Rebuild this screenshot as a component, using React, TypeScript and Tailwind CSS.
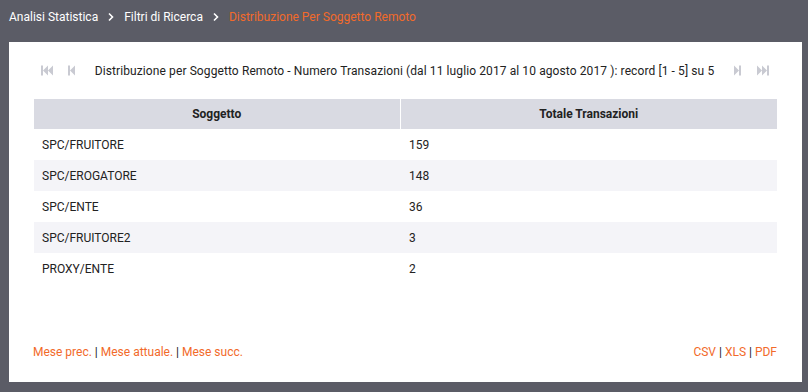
import React from "react";

const ROWS = [
  { soggetto: "SPC/FRUITORE", totale: 159 },
  { soggetto: "SPC/EROGATORE", totale: 148 },
  { soggetto: "SPC/ENTE", totale: 36 },
  { soggetto: "SPC/FRUITORE2", totale: 3 },
  { soggetto: "PROXY/ENTE", totale: 2 },
];

const Chevron = () => (
  <svg width="8" height="10" viewBox="0 0 8 10" className="mx-[9px]">
    <path d="M2 1.5 L5.5 5 L2 8.5" fill="none" stroke="#ffffff" strokeWidth="1.6" />
  </svg>
);

// paginator icons: bar + triangle(s)
const PageIcon = ({ kind }: { kind: "first" | "prev" | "next" | "last" }) => {
  const c = "#c9cad2";
  if (kind === "first")
    return (
      <svg width="13" height="11" viewBox="0 0 13 11">
        <rect x="0" y="0.5" width="2" height="10" fill={c} />
        <path d="M2 5.5 L7 0.5 V10.5 Z M7 5.5 L12 0.5 V10.5 Z" fill={c} />
      </svg>
    );
  if (kind === "prev")
    return (
      <svg width="8" height="11" viewBox="0 0 8 11">
        <rect x="0" y="0.5" width="2" height="10" fill={c} />
        <path d="M2 5.5 L7 0.5 V10.5 Z" fill={c} />
      </svg>
    );
  if (kind === "next")
    return (
      <svg width="8" height="11" viewBox="0 0 8 11">
        <path d="M1 0.5 L6 5.5 L1 10.5 Z" fill={c} />
        <rect x="6" y="0.5" width="2" height="10" fill={c} />
      </svg>
    );
  return (
    <svg width="13" height="11" viewBox="0 0 13 11">
      <path d="M1 0.5 L6 5.5 L1 10.5 Z M6 0.5 L11 5.5 L6 10.5 Z" fill={c} />
      <rect x="11" y="0.5" width="2" height="10" fill={c} />
    </svg>
  );
};

export default function App() {
  return (
    <div className="w-[808px] h-[392px] bg-[#5b5c66] font-['Roboto',sans-serif] flex flex-col">
      {/* breadcrumb */}
      <div className="h-[42px] pl-[9px] pb-[8px] flex items-center text-[12px] text-white">
        <span>Analisi Statistica</span>
        <Chevron />
        <span>Filtri di Ricerca</span>
        <Chevron />
        <span className="text-[#f26a2a]">Distribuzione Per Soggetto Remoto</span>
      </div>

      {/* panel */}
      <div className="ml-[9px] w-[793px] h-[340px] bg-white flex flex-col px-[25px]">
        <div className="h-[57px] flex items-center text-[12px] text-[#222] pl-[7px] pr-[8px]">
          <PageIcon kind="first" />
          <span className="w-[14px]" />
          <PageIcon kind="prev" />
          <span className="flex-1 text-center tracking-[0.1px]">
            Distribuzione per Soggetto Remoto - Numero Transazioni (dal 11 luglio 2017 al 10 agosto 2017 ): record [1 - 5] su 5
          </span>
          <PageIcon kind="next" />
          <span className="w-[15px]" />
          <PageIcon kind="last" />
        </div>

        <table className="w-[743px] text-[12px] text-[#222] border-collapse">
          <thead>
            <tr className="bg-[#d9dae2] h-[30px]">
              <th className="w-[366px] font-bold text-center border-r border-white">Soggetto</th>
              <th className="font-bold text-center">Totale Transazioni</th>
            </tr>
          </thead>
          <tbody>
            {ROWS.map((r, i) => (
              <tr key={r.soggetto} className={`h-[31px] ${i % 2 === 1 ? "bg-[#f4f4f8]" : "bg-white"}`}>
                <td className="pl-[8px]">{r.soggetto}</td>
                <td className="pl-[9px]">{r.totale}</td>
              </tr>
            ))}
          </tbody>
        </table>

        <div className="mt-auto mb-[21px] flex justify-between text-[12px] text-[#222]">
          <div className="-ml-px">
            <span className="text-[#f26a2a]">Mese prec.</span> | <span className="text-[#f26a2a]">Mese attuale.</span> |{" "}
            <span className="text-[#f26a2a]">Mese succ.</span>
          </div>
          <div>
            <span className="text-[#f26a2a]">CSV</span> | <span className="text-[#f26a2a]">XLS</span> |{" "}
            <span className="text-[#f26a2a]">PDF</span>
          </div>
        </div>
      </div>
    </div>
  );
}
